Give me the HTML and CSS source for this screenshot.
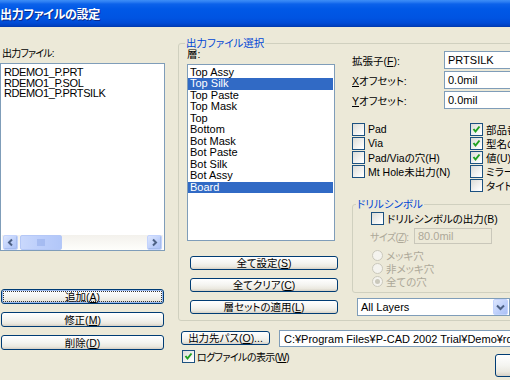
FILE: index.html
```html
<!DOCTYPE html>
<html lang="ja">
<head>
<meta charset="utf-8">
<title>出力ファイルの設定</title>
<link rel="stylesheet" href="styles.css">
</head>
<body>
<div class="titlebar"><span class="title">出力ファイルの設定</span></div>
<div class="client">
  <div class="leftcol">
    <div class="lbl">出力ファイル:</div>
    <div class="filelist">
      <div class="items">
        <div>RDEMO1_P.PRT</div>
        <div>RDEMO1_P.SOL</div>
        <div>RDEMO1_P.PRTSILK</div>
      </div>
      <div class="hscroll">
        <div class="sbtn"><svg width="9" height="9" viewBox="0 0 9 9"><path d="M6 1.5 L3 4.5 L6 7.5" fill="none" stroke="#4D6185" stroke-width="2"/></svg></div>
        <div class="thumb"><svg width="8" height="7" viewBox="0 0 8 7"><path d="M1 0v7M3 0v7M5 0v7M7 0v7" stroke="#8FA9E8" stroke-width="1"/></svg></div>
        <div class="track"></div>
        <div class="sbtn"><svg width="9" height="9" viewBox="0 0 9 9"><path d="M3 1.5 L6 4.5 L3 7.5" fill="none" stroke="#4D6185" stroke-width="2"/></svg></div>
      </div>
    </div>
    <div class="lbtns">
      <button class="btn default">追加(<u>A</u>)</button>
      <button class="btn">修正(<u>M</u>)</button>
      <button class="btn">削除(<u>D</u>)</button>
    </div>
  </div>
  <div class="rightcol">
    <fieldset class="grp main">
      <legend>出力ファイル選択</legend>
      <div class="grpbody">
        <div class="midcol">
          <div class="lbl2">層:</div>
          <div class="layerlist">
            <div>Top Assy</div>
            <div class="sel">Top Silk</div>
            <div>Top Paste</div>
            <div>Top Mask</div>
            <div>Top</div>
            <div>Bottom</div>
            <div>Bot Mask</div>
            <div>Bot Paste</div>
            <div>Bot Silk</div>
            <div>Bot Assy</div>
            <div class="sel">Board</div>
          </div>
          <div class="mbtns">
            <button class="btn">全て設定(<u>S</u>)</button>
            <button class="btn">全てクリア(<u>C</u>)</button>
            <button class="btn">層セットの適用(<u>L</u>)</button>
          </div>
        </div>
        <div class="opts">
          <div class="fields">
            <span class="flbl">拡張子(<u>F</u>):</span><span class="inp">PRTSILK</span>
            <span class="flbl"><u>X</u>オフセット:</span><span class="inp">0.0mil</span>
            <span class="flbl"><u>Y</u>オフセット:</span><span class="inp">0.0mil</span>
          </div>
          <div class="checks">
            <div class="ccol">
              <div class="crow"><span class="cb"></span>Pad</div>
              <div class="crow"><span class="cb"></span>Via</div>
              <div class="crow"><span class="cb"></span>Pad/Viaの穴(H)</div>
              <div class="crow"><span class="cb"></span>Mt Hole未出力(N)</div>
            </div>
            <div class="ccol">
              <div class="crow"><span class="cb on"><svg width="11" height="11" viewBox="0 0 11 11"><path d="M2.5 5 L4.5 7.5 L8.5 2.5" fill="none" stroke="#21A121" stroke-width="2"/></svg></span>部品番号</div>
              <div class="crow"><span class="cb on"><svg width="11" height="11" viewBox="0 0 11 11"><path d="M2.5 5 L4.5 7.5 L8.5 2.5" fill="none" stroke="#21A121" stroke-width="2"/></svg></span>型名の</div>
              <div class="crow"><span class="cb on"><svg width="11" height="11" viewBox="0 0 11 11"><path d="M2.5 5 L4.5 7.5 L8.5 2.5" fill="none" stroke="#21A121" stroke-width="2"/></svg></span>値(U)</div>
              <div class="crow"><span class="cb"></span>ミラー(</div>
              <div class="crow"><span class="cb"></span>タイトル</div>
            </div>
          </div>
          <fieldset class="grp drill">
            <legend>ドリルシンボル</legend>
            <div class="crow dcheck"><span class="cb"></span>ドリルシンボルの出力(B)</div>
            <div class="sizerow"><span class="dis slbl">サイズ(<u>Z</u>):</span><span class="inp disinp">80.0mil</span></div>
            <div class="rrow"><span class="rb"></span><span class="dis">メッキ穴</span></div>
            <div class="rrow"><span class="rb"></span><span class="dis">非メッキ穴</span></div>
            <div class="rrow"><span class="rb on"></span><span class="dis">全ての穴</span></div>
          </fieldset>
          <div class="select"><span class="seltext">All Layers</span><span class="dd"><svg width="9" height="7" viewBox="0 0 9 7"><path d="M1 1.5 L4.5 5 L8 1.5" fill="none" stroke="#4D6185" stroke-width="2"/></svg></span></div>
        </div>
      </div>
    </fieldset>
    <div class="pathrow">
      <button class="btn pbtn">出力先パス(<u>O</u>)...</button>
      <span class="inp pathinp">C:¥Program Files¥P-CAD 2002 Trial¥Demo¥rd</span>
    </div>
    <div class="logrow">
      <div class="crow"><span class="cb on"><svg width="11" height="11" viewBox="0 0 11 11"><path d="M2.5 5 L4.5 7.5 L8.5 2.5" fill="none" stroke="#21A121" stroke-width="2"/></svg></span><span class="logtxt">ログファイルの表示(<u>W</u>)</span></div>
      <button class="btn okbtn"></button>
    </div>
  </div>
</div>
</body>
</html>
```
FILE: styles.css
```css
* { box-sizing: border-box; }
html, body { margin: 0; padding: 0; }
body {
  width: 510px;
  height: 380px;
  overflow: hidden;
  background: #ECE9D8;
  font-family: "Liberation Sans", "Noto Sans CJK JP", sans-serif;
  font-size: 11px;
  color: #000;
  font-feature-settings: "palt";
}
u { text-decoration: underline; text-underline-offset: 1px; }

.titlebar {
  height: 27px;
  display: flex;
  align-items: center;
  background: linear-gradient(#3d8ef7 0, #2a7cf2 2px, #0c62ea 4px, #0058e6 9px, #0054e2 18px, #004bd6 23px, #003fbe 26px, #0037a8 27px);
}
.title {
  color: #fff;
  font-weight: bold;
  font-size: 12px;
  font-family: "Noto Sans CJK JP", sans-serif;
  text-shadow: 1px 1px 0 #0c2a8a;
  line-height: 27px;
  padding-bottom: 1px;
  letter-spacing: -0.3px;
}

.client { display: flex; height: 353px; }

.leftcol {
  width: 165px;
  flex-shrink: 0;
  padding-top: 20px;
  display: flex;
  flex-direction: column;
}
.lbl { line-height: 13px; height: 13px; padding-left: 2px; font-size: 10px; letter-spacing: -0.8px; }
.filelist {
  margin-top: 3px;
  height: 188px;
  border: 1px solid #7F9DB9;
  background: #fff;
  display: flex;
  flex-direction: column;
}
.items {
  flex: 1;
  padding: 3px 0 0 3px;
  line-height: 10.7px;
  letter-spacing: -0.4px;
}
.hscroll {
  height: 15px;
  margin: 0 1px;
  display: flex;
  background: linear-gradient(#f3f1ec, #fefefb);
}
.sbtn {
  width: 15px;
  height: 15px;
  border: 1px solid #c3d3fd;
  border-radius: 2px;
  background: linear-gradient(135deg, #dce6fe, #bccefa 60%, #aac0f6);
  display: flex;
  align-items: center;
  justify-content: center;
  box-shadow: inset -1px -1px 0 #a7bdee;
}
.sbtn:first-child { margin-left: 1px; }
.sbtn:last-child { margin-right: 1px; }
.thumb {
  width: 42px;
  margin-left: 2px;
  border: 1px solid #b5c8f7;
  border-radius: 2px;
  background: linear-gradient(90deg, #c9d8fc, #bccefb 50%, #b2c7f9);
  display: flex;
  align-items: center;
  justify-content: center;
}
.track { flex: 1; }

.btn {
  font: inherit;
  font-size: 10.5px;
  color: #000;
  border: 1px solid #003C74;
  border-radius: 3px;
  background: linear-gradient(#ffffff, #f4f4f0 50%, #ebe9e0 80%, #d6d0c5);
  padding: 0;
  line-height: 12px;
  display: flex;
  align-items: center;
  justify-content: center;
}
.lbtns {
  margin-top: 38px;
  display: flex;
  flex-direction: column;
  gap: 8px;
}
.lbtns .btn { height: 15px; width: 163px; margin-left: 1px; }
.btn.default {
  box-shadow: inset 0 0 0 1px #9cbbf0;
  outline: 1px dotted #333;
  outline-offset: -3px;
}

.rightcol {
  margin-left: 13px;
  width: 392px;
  flex-shrink: 0;
  display: flex;
  flex-direction: column;
}
.grp {
  margin: 0;
  border: 1px solid #D0D0BF;
  border-radius: 3px;
  min-width: 0;
}
.grp legend {
  color: #0046D5;
  line-height: 12px;
  font-size: 10.5px;
  padding: 0 1px;
}
.main {
  margin-top: 10px;
  padding: 0 0 4px 8px;
}
.main > legend { margin-left: -2px; }
.grpbody { display: flex; }
.midcol { width: 151px; flex-shrink: 0; display: flex; flex-direction: column; }
.lbl2 { line-height: 11px; height: 11px; font-size: 10.5px; }
.layerlist {
  margin-top: 4px;
  width: 148px;
  height: 177px;
  border: 1px solid #7F9DB9;
  background: #fff;
  padding-top: 1.5px;
  line-height: 11.5px;
}
.layerlist div { padding-left: 2px; margin-right: 1px; height: 11.5px; }
.layerlist .sel { background: #316AC5; color: #fff; }
.mbtns {
  margin-top: 15px;
  display: flex;
  flex-direction: column;
  gap: 8px;
}
.mbtns .btn { height: 14px; width: 148px; margin-left: 3px; }

.opts { margin-left: 14px; width: 230px; flex-shrink: 0; display: flex; flex-direction: column; }
.fields {
  margin-top: 2px;
  display: grid;
  grid-template-columns: 92px 100px;
  grid-auto-rows: 18px;
  row-gap: 2px;
  align-items: center;
}
.flbl { font-size: 10.5px; }
.inp {
  height: 18px;
  border: 1px solid #7F9DB9;
  background: #fff;
  padding-left: 3px;
  display: flex;
  align-items: center;
  white-space: nowrap;
  overflow: hidden;
}
.checks { margin-top: 13px; display: flex; }
.ccol { width: 118px; flex-shrink: 0; display: flex; flex-direction: column; }
.crow {
  height: 14px;
  display: flex;
  align-items: center;
  gap: 3px;
  white-space: nowrap;
  font-size: 10.5px;
}
.cb {
  width: 13px;
  height: 13px;
  flex-shrink: 0;
  border: 1px solid #1C5180;
  background: linear-gradient(135deg, #dcdcd7, #ffffff 90%);
  display: flex;
  align-items: center;
  justify-content: center;
}

.drill { margin-top: 6px; padding: 0 0 4px 0; }
.drill > legend { margin-left: 3px; }
.dcheck { margin: 2px 0 0 18px; height: 13px; }
.sizerow { margin: 3px 0 0 17px; display: flex; align-items: center; height: 16px; }
.slbl { width: 44px; flex-shrink: 0; white-space: nowrap; font-size: 10px; letter-spacing: -0.6px; }
.dis { color: #ACA899; }
.disinp {
  height: 16px;
  width: 78px;
  background: #ECE9D8;
  border-color: #C9C7BA;
  color: #ACA899;
}
.rrow {
  margin-left: 19px;
  height: 13px;
  display: flex;
  align-items: center;
  gap: 3px;
  font-size: 10.5px;
}
.sizerow + .rrow { margin-top: 5px; }
.rb {
  width: 11px;
  height: 11px;
  border-radius: 50%;
  border: 1px solid #CAC8BB;
  background: #F4F3EE;
  display: flex;
  align-items: center;
  justify-content: center;
}
.rb.on::before {
  content: "";
  width: 5px;
  height: 5px;
  border-radius: 50%;
  background: #CAC8BB;
}

.select {
  margin: 5px 0 0 5px;
  height: 18px;
  width: 153px;
  border: 1px solid #7F9DB9;
  background: #fff;
  display: flex;
  align-items: center;
}
.seltext { flex: 1; padding-left: 3px; }
.dd {
  width: 15px;
  height: 16px;
  margin-right: 1px;
  border-radius: 2px;
  border: 1px solid #c3d3fd;
  background: linear-gradient(135deg, #dce6fe, #bccefa 60%, #aac0f6);
  display: flex;
  align-items: center;
  justify-content: center;
}

.pathrow { margin-top: 9px; display: flex; align-items: flex-start; }
.pbtn { margin: 1px 0 0 3px; width: 89px; height: 14px; }
.pathinp { margin-left: 9px; height: 17px; width: 232px; padding-left: 4px; }
.logrow { margin-top: 3px; display: flex; align-items: flex-start; }
.logrow .crow { margin-left: 4px; height: 13px; gap: 2px; }
.logtxt { font-size: 10px; letter-spacing: -0.6px; }
.okbtn { margin: 4px 0 0 auto; width: 75px; height: 23px; }
```
